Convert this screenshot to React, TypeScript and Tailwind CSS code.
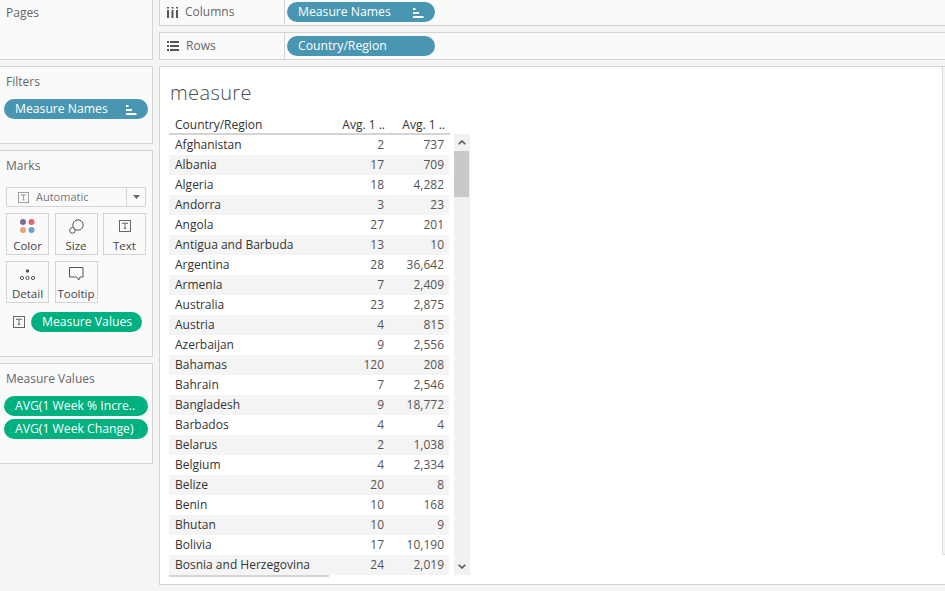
import React from 'react';

const ROWS: [string, string, string][] = [
  ['Afghanistan', '2', '737'],
  ['Albania', '17', '709'],
  ['Algeria', '18', '4,282'],
  ['Andorra', '3', '23'],
  ['Angola', '27', '201'],
  ['Antigua and Barbuda', '13', '10'],
  ['Argentina', '28', '36,642'],
  ['Armenia', '7', '2,409'],
  ['Australia', '23', '2,875'],
  ['Austria', '4', '815'],
  ['Azerbaijan', '9', '2,556'],
  ['Bahamas', '120', '208'],
  ['Bahrain', '7', '2,546'],
  ['Bangladesh', '9', '18,772'],
  ['Barbados', '4', '4'],
  ['Belarus', '2', '1,038'],
  ['Belgium', '4', '2,334'],
  ['Belize', '20', '8'],
  ['Benin', '10', '168'],
  ['Bhutan', '10', '9'],
  ['Bolivia', '17', '10,190'],
  ['Bosnia and Herzegovina', '24', '2,019'],
];

const SortIcon = () => (
  <svg width="11" height="11" viewBox="0 0 11 11" className="shrink-0">
    <path d="M0 1h2.5v2H0zM0 5h6v2H0zM0 9h10.5v2H0z" fill="#fff" />
  </svg>
);

const TextBox = ({ size = 12, color = '#666' }: { size?: number; color?: string }) => (
  <svg width={size} height={size} viewBox="0 0 12 12" className="shrink-0">
    <rect x="0.5" y="0.5" width="11" height="11" fill="none" stroke={color} />
    <path d="M3.5 4V3.2h5V4M6 3.2v5.4M4.8 8.6h2.4" fill="none" stroke={color} />
  </svg>
);

const Pill = ({ label, green, className = '', icon }: { label: string; green?: boolean; className?: string; icon?: boolean }) => (
  <div
    className={`h-5 rounded-full flex items-center justify-between pl-[11px] pr-[11px] text-white text-[12.2px] whitespace-nowrap overflow-hidden ${green ? 'bg-[#00b180]' : 'bg-[#4996b2]'} ${className}`}
  >
    <span>{label}</span>
    {icon && <SortIcon />}
  </div>
);

const Card = ({ title, className = '', children }: { title: string; className?: string; children?: React.ReactNode }) => (
  <div className={`border border-l-0 border-[#d4d4d4] bg-[#fafafa] ${className}`}>
    <div className="pl-[6px] text-[12px] leading-4 text-[#666]">{title}</div>
    {children}
  </div>
);

const MarkButton = ({ label, children }: { label: string; children: React.ReactNode }) => (
  <div className="w-[43px] h-[42px] border border-[#d4d4d4] flex flex-col items-center text-[11.5px] leading-4 text-[#444]">
    <div className="h-[25px] flex items-center justify-center">{children}</div>
    <span className="whitespace-nowrap">{label}</span>
  </div>
);

const Shelf = ({ label, icon, pill, pillIcon, className = '' }: { label: string; icon: React.ReactNode; pill: string; pillIcon?: boolean; className?: string }) => (
  <div className={`border border-r-0 border-[#d4d4d4] bg-[#fafafa] flex ${className}`}>
    <div className="w-[125px] border-r border-[#d4d4d4] flex items-center pl-[7px] gap-[7px] text-[12px] text-[#666]">
      {icon}
      <span>{label}</span>
    </div>
    <div className="pl-[2px] flex items-center">
      <Pill label={pill} icon={pillIcon} className="w-[148px]" />
    </div>
  </div>
);

export default function App() {
  return (
    <div
      className="w-[945px] h-[591px] overflow-hidden bg-[#f5f5f5] flex gap-[6px]"
      style={{ fontFamily: '"Open Sans", "Liberation Sans", sans-serif' }}
    >
      {/* left cards */}
      <div className="w-[153px] shrink-0 flex flex-col gap-[6px]">
        <Card title="Pages" className="h-[60px] border-t-0 pt-[5px]" />
        <Card title="Filters" className="h-[78px] pt-[7px]">
          <div className="pl-1 pr-1 mt-[9px]">
            <Pill label="Measure Names" icon />
          </div>
        </Card>
        <Card title="Marks" className="h-[207px] pt-[7px]">
          <div className="mt-[13px] ml-[6px] w-[140px] h-5 border border-[#d4d4d4] rounded-[2px] flex items-center text-[11px] text-[#777]">
            <div className="flex-1 flex items-center pl-[11px] gap-[7px] border-r border-[#d4d4d4] h-full">
              <TextBox size={11} color="#999" />
              <span>Automatic</span>
            </div>
            <div className="w-[18px] flex justify-center">
              <svg width="7" height="4" viewBox="0 0 7 4"><path d="M0 0h7L3.5 4z" fill="#666" /></svg>
            </div>
          </div>
          <div className="ml-[6px] mt-[6px] flex flex-wrap gap-x-[5.5px] gap-y-[6px] w-[141px]">
            <MarkButton label="Color">
              <svg width="15" height="14" viewBox="0 0 15 14">
                <circle cx="3" cy="3" r="3" fill="#7c6a9c" />
                <circle cx="11.5" cy="3" r="3" fill="#e8606f" />
                <circle cx="3" cy="11" r="3" fill="#f0a070" />
                <circle cx="11.5" cy="11" r="3" fill="#6f9fd0" />
              </svg>
            </MarkButton>
            <MarkButton label="Size">
              <svg width="15" height="15" viewBox="0 0 15 15" fill="none" stroke="#555">
                <circle cx="9" cy="6" r="5.2" />
                <circle cx="3.4" cy="11.4" r="2.8" fill="#fafafa" />
              </svg>
            </MarkButton>
            <MarkButton label="Text">
              <TextBox />
            </MarkButton>
            <MarkButton label="Detail">
              <svg width="15" height="11" viewBox="0 0 15 11" fill="none" stroke="#555">
                <circle cx="7.5" cy="2" r="1.7" fill="#555" stroke="none" />
                <circle cx="2" cy="9" r="1.6" />
                <circle cx="7.5" cy="9" r="1.6" />
                <circle cx="13" cy="9" r="1.6" />
              </svg>
            </MarkButton>
            <MarkButton label="Tooltip">
              <svg width="15" height="14" viewBox="0 0 15 14" fill="none" stroke="#555">
                <path d="M.5.5h13.5v9.5H11l-1.2 3-2.3-3H.5z" />
              </svg>
            </MarkButton>
          </div>
          <div className="ml-[13px] mt-[9px] flex items-center gap-[6px]">
            <TextBox />
            <Pill label="Measure Values" green className="w-[111px]" />
          </div>
        </Card>
        <Card title="Measure Values" className="h-[101px] pt-[7px]">
          <div className="px-1 mt-[9px] flex flex-col gap-[3px]">
            <Pill label="AVG(1 Week % Incre.." green />
            <Pill label="AVG(1 Week Change)" green />
          </div>
        </Card>
      </div>

      {/* shelves and view */}
      <div className="flex-1 flex flex-col gap-[6px]">
        <Shelf
          label="Columns"
          pill="Measure Names"
          pillIcon
          className="h-[26px] border-t-0 pb-px"
          icon={
            <svg width="11" height="11" viewBox="0 0 11 11" fill="#555">
              <path d="M0 3h2v8H0zM4.5 3h2v8h-2zM9 3h2v8H9zM0 0h2v1.5H0zM4.5 0h2v1.5h-2zM9 0h2v1.5H9z" />
            </svg>
          }
        />
        <Shelf
          label="Rows"
          pill="Country/Region"
          className="h-[28px]"
          icon={
            <svg width="12" height="10" viewBox="0 0 12 10" fill="#555">
              <path d="M0 0h2v2H0zM3 0h9v2H3zM0 4h2v2H0zM3 4h9v2H3zM0 8h2v2H0zM3 8h9v2H3z" />
            </svg>
          }
        />
        <div className="h-[519px] border border-r-0 border-[#d4d4d4] bg-white pl-[9px] relative">
          <div className="absolute right-0 top-0 w-[3px] h-[488px] bg-[#f3f3f3] border-l border-b border-[#dcdcdc]" />
          <div className="mt-[14px] h-[23px] pl-[1px] text-[20px] leading-6 text-[#4a4a4a] font-light tracking-[0.4px]">measure</div>
          <div className="mt-[10px] flex">
            <div className="w-[281px]">
              <div className="h-[21px] pt-[2px] border-b-2 border-[#d4d4d4] flex items-center text-[12px] text-[#333]">
                <span className="w-[160px] pl-[6px]">Country/Region</span>
                <span className="w-[56px] text-right whitespace-nowrap">Avg. 1 ..</span>
                <span className="w-[60px] text-right whitespace-nowrap">Avg. 1 ..</span>
              </div>
              {ROWS.map((r, i) => (
                <div key={r[0]} className={`h-5 flex items-center text-[12px] w-[280px] ${i % 2 === 1 ? 'bg-[#f4f4f4]' : 'bg-white'}`}>
                  <span className="w-[160px] pl-[6px] text-[#333] whitespace-nowrap">{r[0]}</span>
                  <span className="w-[55px] text-right text-[#555]">{r[1]}</span>
                  <span className="w-[60px] text-right text-[#555]">{r[2]}</span>
                </div>
              ))}
              <div className="w-[160px] border-b-2 border-[#d4d4d4]" />
            </div>
            <div className="ml-1 mt-[20px] w-4 h-[441px] bg-[#f1f1f1] flex flex-col items-center justify-between">
              <div className="w-full">
                <div className="h-[17px] flex items-center justify-center">
                  <svg width="8" height="5" viewBox="0 0 8 5" fill="none" stroke="#555" strokeWidth="1.6"><path d="M.7 4.3 4 1l3.3 3.3" /></svg>
                </div>
                <div className="w-[15px] h-[46px] bg-[#c9c9c9]" />
              </div>
              <div className="h-[17px] flex items-center justify-center">
                <svg width="8" height="5" viewBox="0 0 8 5" fill="none" stroke="#555" strokeWidth="1.6"><path d="M.7.7 4 4 7.3.7" /></svg>
              </div>
            </div>
          </div>
        </div>
      </div>
    </div>
  );
}
